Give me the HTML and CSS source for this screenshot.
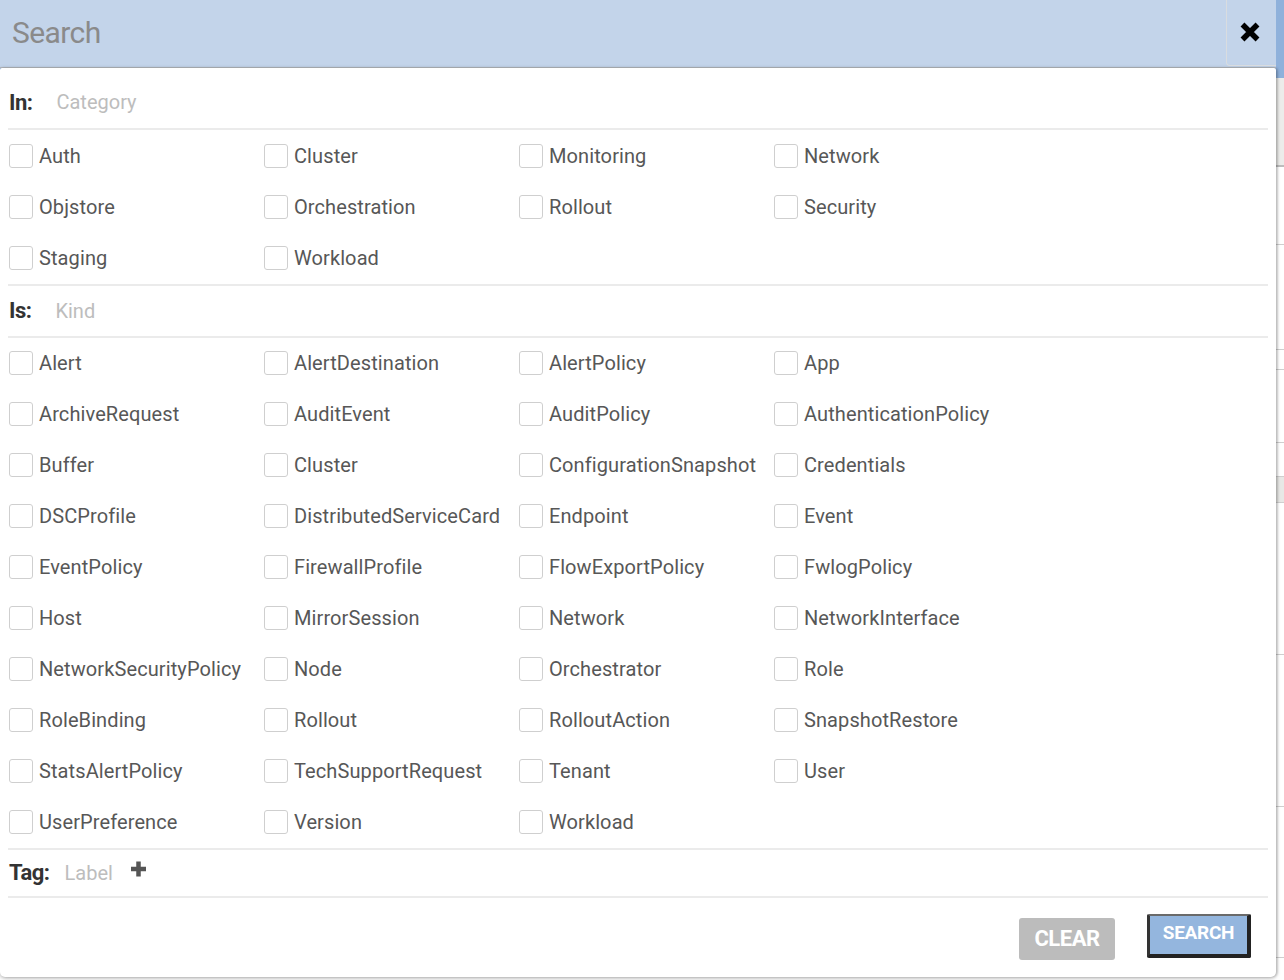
FILE: index.html
```html
<!DOCTYPE html>
<html lang="en">
<head>
<meta charset="utf-8">
<title>Search</title>
<link rel="stylesheet" href="styles.css">
</head>
<body>
<div class="backdrop">
  <div class="bd-top"></div>
  <div class="bd-band"></div>
  <div class="bd-row h78"></div>
  <div class="bd-row h105"></div>
  <div class="bd-row h20"></div>
  <div class="bd-row h73"></div>
  <div class="bd-row h34"></div>
  <div class="bd-block"></div>
  <div class="bd-row h152"></div>
  <div class="bd-row h152"></div>
  <div class="bd-row h151"></div>
</div>

<div class="overlay">
  <div class="search-bar">
    <div class="search-input">Search</div>
    <button class="close-btn" aria-label="Close">
      <svg width="22" height="22" viewBox="0 0 22 22"><path d="M3.5 3.5 L18.5 18.5 M18.5 3.5 L3.5 18.5" stroke="#000" stroke-width="5.5" fill="none"/></svg>
    </button>
  </div>

  <div class="panel">
    <div class="section-head head-in">
      <span class="head-label">In:</span>
      <span class="head-ph">Category</span>
    </div>
    <div class="options options-cat">
      <label class="opt"><span class="box"></span>Auth</label>
      <label class="opt"><span class="box"></span>Cluster</label>
      <label class="opt"><span class="box"></span>Monitoring</label>
      <label class="opt"><span class="box"></span>Network</label>
      <label class="opt"><span class="box"></span>Objstore</label>
      <label class="opt"><span class="box"></span>Orchestration</label>
      <label class="opt"><span class="box"></span>Rollout</label>
      <label class="opt"><span class="box"></span>Security</label>
      <label class="opt"><span class="box"></span>Staging</label>
      <label class="opt"><span class="box"></span>Workload</label>
    </div>

    <div class="section-head head-is">
      <span class="head-label">Is:</span>
      <span class="head-ph">Kind</span>
    </div>
    <div class="options options-kind">
      <label class="opt"><span class="box"></span>Alert</label>
      <label class="opt"><span class="box"></span>AlertDestination</label>
      <label class="opt"><span class="box"></span>AlertPolicy</label>
      <label class="opt"><span class="box"></span>App</label>
      <label class="opt"><span class="box"></span>ArchiveRequest</label>
      <label class="opt"><span class="box"></span>AuditEvent</label>
      <label class="opt"><span class="box"></span>AuditPolicy</label>
      <label class="opt"><span class="box"></span>AuthenticationPolicy</label>
      <label class="opt"><span class="box"></span>Buffer</label>
      <label class="opt"><span class="box"></span>Cluster</label>
      <label class="opt"><span class="box"></span>ConfigurationSnapshot</label>
      <label class="opt"><span class="box"></span>Credentials</label>
      <label class="opt"><span class="box"></span>DSCProfile</label>
      <label class="opt"><span class="box"></span>DistributedServiceCard</label>
      <label class="opt"><span class="box"></span>Endpoint</label>
      <label class="opt"><span class="box"></span>Event</label>
      <label class="opt"><span class="box"></span>EventPolicy</label>
      <label class="opt"><span class="box"></span>FirewallProfile</label>
      <label class="opt"><span class="box"></span>FlowExportPolicy</label>
      <label class="opt"><span class="box"></span>FwlogPolicy</label>
      <label class="opt"><span class="box"></span>Host</label>
      <label class="opt"><span class="box"></span>MirrorSession</label>
      <label class="opt"><span class="box"></span>Network</label>
      <label class="opt"><span class="box"></span>NetworkInterface</label>
      <label class="opt"><span class="box"></span>NetworkSecurityPolicy</label>
      <label class="opt"><span class="box"></span>Node</label>
      <label class="opt"><span class="box"></span>Orchestrator</label>
      <label class="opt"><span class="box"></span>Role</label>
      <label class="opt"><span class="box"></span>RoleBinding</label>
      <label class="opt"><span class="box"></span>Rollout</label>
      <label class="opt"><span class="box"></span>RolloutAction</label>
      <label class="opt"><span class="box"></span>SnapshotRestore</label>
      <label class="opt"><span class="box"></span>StatsAlertPolicy</label>
      <label class="opt"><span class="box"></span>TechSupportRequest</label>
      <label class="opt"><span class="box"></span>Tenant</label>
      <label class="opt"><span class="box"></span>User</label>
      <label class="opt"><span class="box"></span>UserPreference</label>
      <label class="opt"><span class="box"></span>Version</label>
      <label class="opt"><span class="box"></span>Workload</label>
    </div>

    <div class="section-head head-tag">
      <span class="head-label">Tag:</span>
      <span class="head-ph tag-ph">Label</span>
      <svg class="plus" width="17" height="16" viewBox="0 0 17 16"><path d="M8.5 0.5 V15.5 M1 8 H16" stroke="#555" stroke-width="4.5" fill="none"/></svg>
    </div>

    <div class="actions">
      <button class="btn btn-clear">CLEAR</button>
      <button class="btn btn-search">SEARCH</button>
    </div>
  </div>
</div>
</body>
</html>
```

FILE: styles.css
```css
* { box-sizing: border-box; }

html, body {
  margin: 0;
  padding: 0;
  background: #fff;
  font-family: Roboto, "Noto Sans", "Liberation Sans", sans-serif;
}

body {
  width: 1284px;
  height: 980px;
  position: relative;
  overflow: hidden;
}

/* underlying page */
.backdrop {
  display: flex;
  flex-direction: column;
  width: 1284px;
}
.bd-top { height: 78px; background: #8fb1db; }
.bd-band { height: 89px; background: #ececea; border-bottom: 2px solid #bdbdbd; }
.bd-row { border-bottom: 1px solid #cfcfcf; }
.h78 { height: 78px; }
.h105 { height: 105px; }
.h20 { height: 20px; }
.h73 { height: 73px; }
.h34 { height: 34px; }
.h152 { height: 152px; }
.h151 { height: 151px; }
.bd-block { height: 26px; background: #e8e8e6; border-bottom: 1px solid #cfcfcf; }

/* overlay */
.overlay {
  position: absolute;
  top: 0;
  left: 0;
  width: 1276px;
}

.search-bar {
  height: 68px;
  background: #c3d4ea;
  display: flex;
  align-items: stretch;
  border-bottom: 1px solid #b8bcc2;
}
.search-input {
  flex: 1;
  display: flex;
  align-items: center;
  padding-left: 12px;
  padding-bottom: 2px;
  font-size: 30px;
  letter-spacing: -0.6px;
  color: #8a8a8a;
}
.close-btn {
  width: 50px;
  height: 66px;
  border: 0;
  border-left: 1px solid #d9dcdf;
  border-bottom: 1px solid #d9dcdf;
  border-bottom-left-radius: 4px;
  background: transparent;
  padding: 0 4px 2px 0;
  display: flex;
  align-items: center;
  justify-content: center;
}

.panel {
  background: #fff;
  padding: 8px 8px 0 8px;
  height: 909px;
  border-radius: 2px 2px 5px 5px;
  box-shadow: 0 1px 4px rgba(0, 0, 0, 0.35), 2px 0 2px rgba(0, 0, 0, 0.12);
}

.section-head {
  display: flex;
  align-items: center;
  padding-left: 1px;
  border-bottom: 2px solid #ebebeb;
}
.head-in { height: 54px; }
.head-is { height: 52px; }
.head-tag { height: 48px; }

.head-label {
  font-size: 22px;
  font-weight: 700;
  color: #333;
  letter-spacing: -0.5px;
}
.head-ph {
  font-size: 20px;
  color: #bdbdbd;
  margin-left: 24px;
}
.tag-ph { margin-left: 15px; }
.plus { margin-left: 17px; margin-top: -8px; }

.options {
  display: grid;
  grid-template-columns: repeat(4, 255px);
  border-bottom: 2px solid #ebebeb;
}
.options-cat { grid-auto-rows: 51.33px; }
.options-kind { grid-auto-rows: 51px; }

.opt {
  display: flex;
  align-items: center;
  gap: 6px;
  padding-left: 1px;
  font-size: 20px;
  color: #575757;
  white-space: nowrap;
  letter-spacing: 0.1px;
}
.box {
  width: 24px;
  height: 24px;
  flex: none;
  border: 1.5px solid #cfcfcf;
  border-radius: 3px;
  background: #fff;
}

.actions {
  display: flex;
  justify-content: flex-end;
  align-items: flex-start;
  gap: 32px;
  padding: 16px 17px 0 0;
}
.btn {
  font-family: Roboto, "Liberation Sans", sans-serif;
  font-weight: 700;
  color: #fff;
  border-radius: 3px;
  cursor: pointer;
}
.btn-clear {
  margin-top: 4px;
  width: 96px;
  height: 42px;
  background: #bcbcbc;
  border: 0;
  font-size: 22px;
  letter-spacing: -0.5px;
}
.btn-search {
  width: 104px;
  height: 44px;
  background: #94b6de;
  border-style: solid;
  border-width: 2px 4px 4px 3px;
  border-color: #6a6a6a #222 #222 #333;
  border-radius: 2px;
  font-size: 19px;
  letter-spacing: -0.3px;
  padding: 0 0 4px 0;
}
```
